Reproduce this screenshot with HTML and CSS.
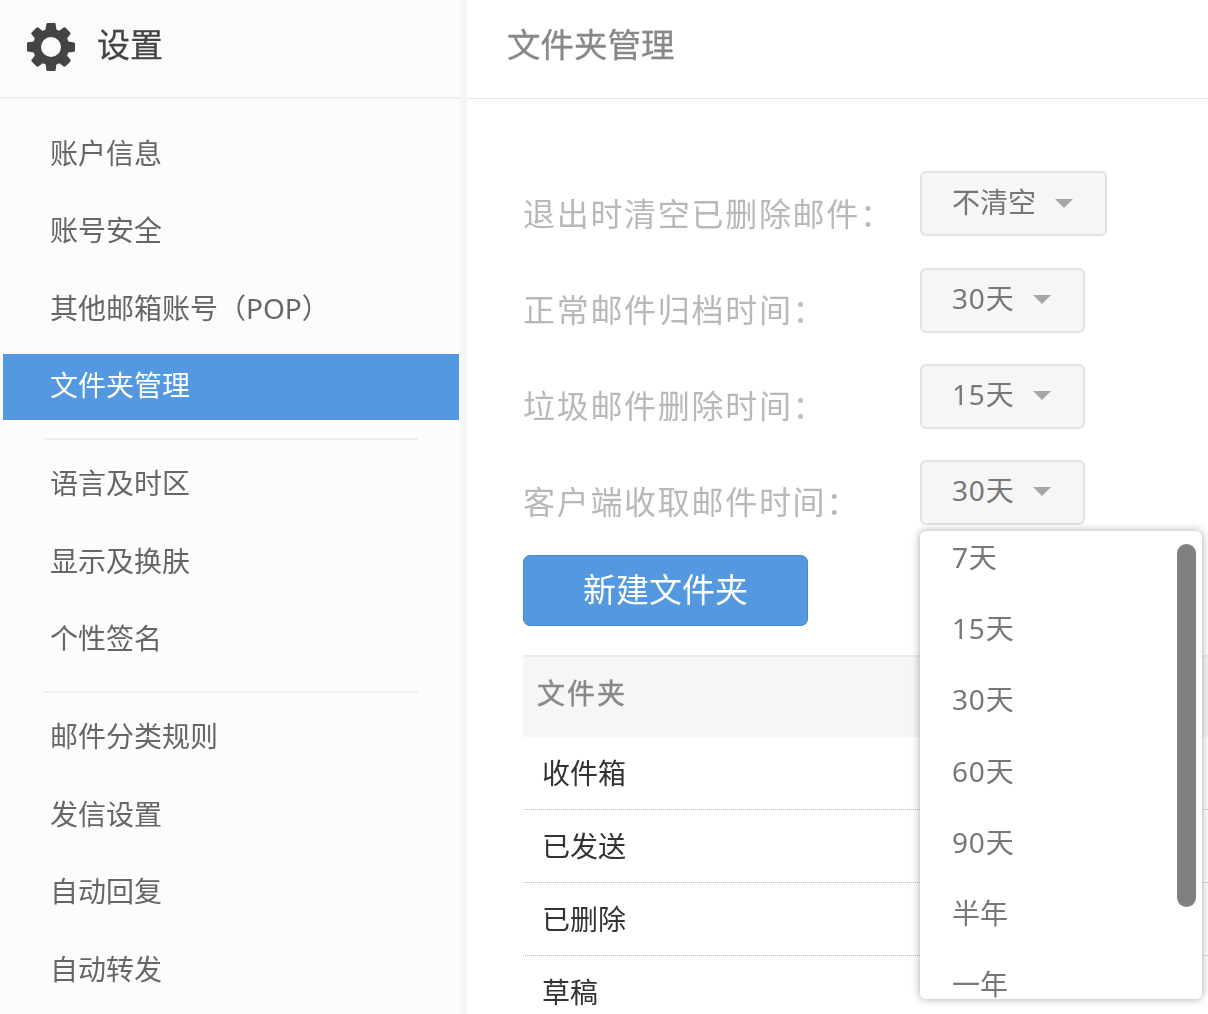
FILE: index.html
```html
<!DOCTYPE html>
<html lang="zh-CN">
<head>
<meta charset="utf-8">
<title>文件夹管理</title>
<link rel="stylesheet" href="styles.css">
</head>
<body>
<div class="app">
  <aside class="sidebar">
    <header class="side-head">
      <svg class="gear" viewBox="0 0 1536 1536" aria-hidden="true"><path fill-rule="evenodd" d="M1088 768a320 320 0 1 0-640 0 320 320 0 1 0 640 0zm448-109v222q0 12-8 23t-20 13l-185 28q-19 54-39 91 35 50 107 138 10 12 10 25t-9 23q-27 37-99 108t-94 71q-12 0-26-9l-138-108q-44 23-91 38-16 136-29 186-7 28-36 28h-222q-14 0-24.5-8.5t-11.5-21.5l-28-184q-49-16-90-37l-141 107q-10 9-25 9-14 0-25-11-126-114-165-168-7-10-7-23 0-12 8-23 15-21 51-66.5t54-70.5q-27-50-41-99l-183-27q-13-2-21-12.5t-8-23.5v-222q0-12 8-23t19-13l186-28q14-46 39-92-40-57-107-138-10-12-10-24 0-10 9-23 26-36 98.5-107.5t94.5-71.5q13 0 26 10l138 107q44-23 91-38 16-136 29-186 7-28 36-28h222q14 0 24.5 8.5t11.5 21.5l28 184q49 16 90 37l142-107q9-9 24-9 13 0 25 10 129 119 165 170 7 8 7 22 0 12-8 23-15 21-51 66.5t-54 70.5q26 50 41 98l183 28q13 2 21 12.5t8 23.5z"/></svg>
      <span class="side-title">设置</span>
    </header>
    <nav class="nav">
      <ul class="nav-group">
        <li class="nav-item">账户信息</li>
        <li class="nav-item">账号安全</li>
        <li class="nav-item">其他邮箱账号（POP）</li>
        <li class="nav-item active">文件夹管理</li>
      </ul>
      <hr class="nav-rule">
      <ul class="nav-group">
        <li class="nav-item">语言及时区</li>
        <li class="nav-item">显示及换肤</li>
        <li class="nav-item">个性签名</li>
      </ul>
      <hr class="nav-rule">
      <ul class="nav-group">
        <li class="nav-item">邮件分类规则</li>
        <li class="nav-item">发信设置</li>
        <li class="nav-item">自动回复</li>
        <li class="nav-item">自动转发</li>
      </ul>
    </nav>
  </aside>
  <main class="main">
    <header class="main-head">文件夹管理</header>
    <div class="content">
      <div class="form">
        <div class="form-row">
          <label class="form-label">退出时清空已删除邮件：</label>
          <div class="select">不清空<i class="caret"></i></div>
        </div>
        <div class="form-row">
          <label class="form-label">正常邮件归档时间：</label>
          <div class="select"><span class="days">30天</span><i class="caret"></i></div>
        </div>
        <div class="form-row">
          <label class="form-label">垃圾邮件删除时间：</label>
          <div class="select"><span class="days">15天</span><i class="caret"></i></div>
        </div>
        <div class="form-row">
          <label class="form-label">客户端收取邮件时间：</label>
          <div class="select-wrap">
            <div class="select"><span class="days">30天</span><i class="caret"></i></div>
            <div class="menu">
              <ul class="menu-list">
                <li class="menu-item"><span class="days">7天</span></li>
                <li class="menu-item"><span class="days">15天</span></li>
                <li class="menu-item"><span class="days">30天</span></li>
                <li class="menu-item"><span class="days">60天</span></li>
                <li class="menu-item"><span class="days">90天</span></li>
                <li class="menu-item">半年</li>
                <li class="menu-item">一年</li>
              </ul>
              <div class="menu-thumb"></div>
            </div>
          </div>
        </div>
      </div>
      <button class="btn-new" type="button">新建文件夹</button>
      <div class="table">
        <div class="table-head">文件夹</div>
        <div class="table-row">收件箱</div>
        <div class="table-row">已发送</div>
        <div class="table-row">已删除</div>
        <div class="table-row">草稿</div>
      </div>
    </div>
  </main>
</div>
</body>
</html>
```
FILE: styles.css
```css
* {
  box-sizing: border-box;
}

html,
body {
  margin: 0;
  height: 1014px;
  overflow: hidden;
  background: #fff;
}

body {
  font-family: "Noto Sans", "Noto Sans CJK SC", sans-serif;
  font-size: 28px;
  color: #666;
}

.app {
  display: flex;
  height: 1014px;
  filter: blur(0.5px);
}

.sidebar {
  flex: 0 0 467px;
  background: #fcfcfc;
  border-right: 7px solid #f6f6f6;
}

.side-head {
  display: flex;
  align-items: center;
  gap: 22px;
  height: 99px;
  padding: 0 0 4px 27px;
  background: #fbfbfb;
  border-bottom: 2px solid #eeeeee;
}

.gear {
  width: 48px;
  height: 48px;
  fill: #444;
}

.side-title {
  margin-top: -3px;
  font-size: 33px;
  line-height: 40px;
  color: #444;
  -webkit-text-stroke: 0.3px #444;
}

.nav {
  padding-top: 22.5px;
}

.nav-group {
  display: flex;
  flex-direction: column;
  gap: 11.5px;
  margin: 0;
  padding: 0;
  list-style: none;
}

.nav-item {
  height: 66px;
  margin: 0 1px 0 3px;
  padding-left: 47px;
  line-height: 62px;
  color: #666;
  white-space: nowrap;
}

.nav-item.active {
  background: #5499e0;
  color: #fff;
}

.nav-rule {
  width: 374px;
  height: 2px;
  margin: 17.5px 0 12.5px 44px;
  border: 0;
  background: #eee;
}

.main {
  flex: 1;
  min-width: 0;
}

.main-head {
  height: 99px;
  padding: 0 0 8px 40px;
  font-size: 33.5px;
  line-height: 88px;
  color: #888;
  border-bottom: 1px solid #e6e6e6;
  -webkit-text-stroke: 0.3px #888;
}

.content {
  padding: 72px 0 0 56px;
}

.form {
  display: flex;
  flex-direction: column;
  gap: 31px;
}

.form-row {
  display: flex;
  height: 65px;
}

.form-label {
  flex: 0 0 397px;
  padding-top: 20px;
  font-size: 32px;
  line-height: 46px;
  letter-spacing: 1.7px;
  color: #b8b8b8;
  white-space: nowrap;
}

.select {
  display: inline-flex;
  align-items: center;
  height: 65px;
  padding: 0 32px 5px 30px;
  background: #f6f6f6;
  border: 2px solid #e2e2e2;
  border-radius: 6px;
  color: #777;
  white-space: nowrap;
}

.form-row + .form-row .select {
  margin-top: 1px;
  padding-bottom: 7px;
}

.days {
  letter-spacing: 0.8px;
}

.caret {
  width: 0;
  height: 0;
  margin: 5px 0 0 19px;
  border-top: 9px solid #a6a6a6;
  border-left: 9px solid transparent;
  border-right: 9px solid transparent;
}

.select-wrap {
  position: relative;
}

.menu {
  position: absolute;
  top: 72px;
  left: 0;
  width: 282px;
  height: 468px;
  overflow: hidden;
  background: #fff;
  border-radius: 6px;
  box-shadow: 0 0 8px rgba(0, 0, 0, 0.35);
}

.menu-list {
  margin: -9px 0 0;
  padding: 0;
  list-style: none;
}

.menu-item {
  height: 71.2px;
  padding-left: 32px;
  line-height: 71px;
  color: #777;
}

.menu-thumb {
  position: absolute;
  top: 13px;
  right: 6px;
  width: 19px;
  height: 363px;
  background: #808080;
  border-radius: 10px;
}

.btn-new {
  display: block;
  width: 285px;
  height: 71px;
  margin-top: 31px;
  padding: 0 0 6px;
  background: #5499e0;
  border: 1px solid #4a88c8;
  border-radius: 7px;
  font: inherit;
  font-size: 33px;
  color: #fff;
}

.table {
  margin-top: 29px;
  border-top: 2px solid #ececec;
}

.table-head {
  height: 80px;
  padding-left: 14px;
  line-height: 72px;
  letter-spacing: 2px;
  background: #f6f6f6;
  color: #888;
  -webkit-text-stroke: 0.4px #888;
}

.table-row {
  height: 73px;
  padding-left: 19px;
  line-height: 72px;
  color: #333;
  border-bottom: 1px dotted #bbb;
}
```
